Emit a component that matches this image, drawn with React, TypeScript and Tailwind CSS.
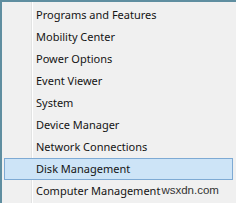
import React from "react";

const items = [
  "Programs and Features",
  "Mobility Center",
  "Power Options",
  "Event Viewer",
  "System",
  "Device Manager",
  "Network Connections",
  "Disk Management",
  "Computer Management",
];

export default function App() {
  return (
    <div className="w-[236px] h-[203px] overflow-hidden bg-[#5f8ea0] pl-[2px] pt-[2px]">
      <div className="relative h-full bg-[#f0f0f0] pt-[2px] pl-[2px] pr-[3px] text-[11px] text-[#141414]" style={{ fontFamily: '"Noto Sans", sans-serif' }}>
        <div className="absolute left-[29px] top-0 bottom-0 w-[1px] bg-[#e2e3e3]" />
        <div className="absolute left-[30px] top-0 bottom-0 w-[1px] bg-[#ffffff]" />
        {items.map((t, i) => (
          <div
            key={t}
            className={
              "relative h-[22px] flex items-center whitespace-nowrap " +
              (i === 7 ? "bg-[#cde4f7] border border-[#7eaad4] pl-[31px]" : "pl-[32px]")
            }
          >
            {t}
            {i === 8 && (
              <span className="text-[#333] text-[11.5px] ml-[1px]" style={{ fontFamily: '"Liberation Sans", sans-serif' }}>wsxdn.com</span>
            )}
          </div>
        ))}
      </div>
    </div>
  );
}
